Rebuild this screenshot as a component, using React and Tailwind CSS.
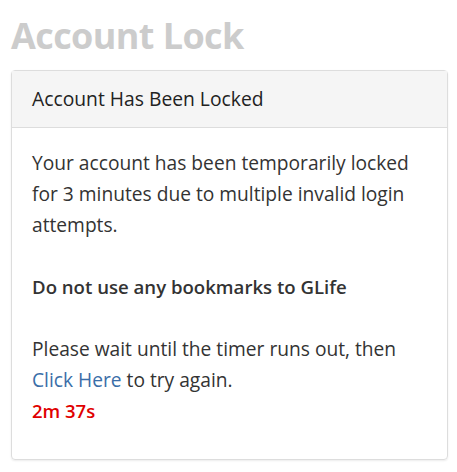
export default function App() {
  return (
    <div className="min-h-screen bg-white px-[11px] pt-[14px]" style={{ fontFamily: '"Open Sans", sans-serif' }}>
      <h1 className="text-[36px] font-bold leading-[44px] text-[#cccccc] tracking-[-0.6px] mb-[12px]">Account Lock</h1>
      <div className="w-[437px] rounded-[4px] border border-[#dddddd] shadow-[0_1px_2px_rgba(0,0,0,0.08)]">
        <div className="h-[57px] bg-[#f5f5f5] border-b border-[#dddddd] px-[20px] flex items-center text-[19.3px] text-[#222]">
          Account Has Been Locked
        </div>
        <div className="px-[20px] pt-[19px] pb-[33px] text-[19.2px] leading-[31px] text-[#333]">
          <p>Your account has been temporarily locked for 3 minutes due to multiple invalid login attempts.</p>
          <br />
          <p className="font-semibold text-[18.6px]">Do not use any bookmarks to GLife</p>
          <br />
          <p>
            Please wait until the timer runs out, then <a className="text-[#3a6ea8]" href="#">Click Here</a> to try again.
          </p>
          <p className="text-[#e00000] font-semibold text-[18.5px]">2m 37s</p>
        </div>
      </div>
    </div>
  );
}
